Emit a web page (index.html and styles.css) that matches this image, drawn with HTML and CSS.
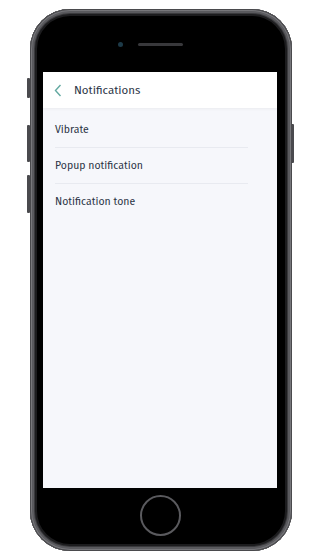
FILE: index.html
```html
<!DOCTYPE html>
<html lang="en">
<head>
  <meta charset="UTF-8" />
  <meta name="viewport" content="width=device-width, initial-scale=1" />
  <title>Notifications</title>
  <link rel="stylesheet" href="styles.css">
</head>
<body>

  <div class="phone">
    <!-- side buttons -->
    <span class="side-btn mute"></span>
    <span class="side-btn vol-up"></span>
    <span class="side-btn vol-down"></span>
    <span class="side-btn power"></span>

    <div class="bezel-top">
      <span class="camera"></span>
      <span class="speaker"></span>
    </div>

    <div class="screen">
      <div class="app-header">
        <svg class="back" width="8" height="13" viewBox="0 0 8 13">
          <path d="M6.5 1 L1.5 6.5 L6.5 12" fill="none" stroke="#63a9a1" stroke-width="1.4" />
        </svg>
        <span class="title">Notifications</span>
      </div>

      <ul class="settings">
        <li>Vibrate</li>
        <li>Popup notification</li>
        <li>Notification tone</li>
      </ul>
    </div>

    <div class="bezel-bottom">
      <span class="home"></span>
    </div>
  </div>

</body>
</html>
```

FILE: styles.css
```css
body {
  margin: 0;
  background: #fff;
  font-family: "Fira Sans", "Open Sans", "Noto Sans", sans-serif;
}

.phone {
  position: relative;
  box-sizing: border-box;
  width: 262px;
  height: 542px;
  margin: 9px 0 0 30px;
  padding: 0 15px 0 13px;
  display: flex;
  flex-direction: column;
  background: #000;
  border-radius: 40px;
  box-shadow:
    inset 0 0 0 1px #4a4a4d,
    inset 0 0 0 2px #77777b,
    inset 0 0 0 4px #5a5a5e,
    inset 0 0 0 5px #3a3a3d,
    inset 0 0 0 7px #1c1c1e;
}

.side-btn {
  position: absolute;
  width: 3px;
  background: #4a4a4e;
  border-radius: 1px;
}

.mute { left: -3px; top: 69px; height: 20px; }
.vol-up { left: -3px; top: 116px; height: 37px; }
.vol-down { left: -3px; top: 166px; height: 38px; }
.power { right: -2px; top: 115px; height: 39px; }

.bezel-top {
  height: 63px;
  display: flex;
  align-items: flex-start;
  gap: 15px;
  padding: 33px 0 0 75px;
  box-sizing: border-box;
}

.camera {
  width: 5px;
  height: 5px;
  border-radius: 50%;
  background: #1d3a48;
}

.speaker {
  width: 45px;
  height: 3px;
  margin-top: 1px;
  border-radius: 2px;
  background: #38383b;
}

.screen {
  height: 416px;
  background: #f6f7fb;
}

.app-header {
  height: 36px;
  display: flex;
  align-items: center;
  padding-left: 11px;
  background: #fff;
  box-shadow: 0 1px 3px rgba(0, 0, 0, 0.05);
}

.back {
  margin-right: 12px;
}

.title {
  font-size: 11.5px;
  color: #2b3445;
}

.settings {
  list-style: none;
  margin: 0;
  padding: 4px 29px 0 12px;
}

.settings li {
  height: 35px;
  line-height: 35px;
  font-size: 10.5px;
  color: #2b3445;
  border-bottom: 1px solid #e8eaf0;
}

.settings li:last-child {
  border-bottom: none;
}

.bezel-bottom {
  flex: 1;
  display: flex;
  justify-content: center;
  padding-top: 7px;
}

.home {
  width: 37px;
  height: 37px;
  border-radius: 50%;
  border: 2px solid #5a5a5e;
}
```
